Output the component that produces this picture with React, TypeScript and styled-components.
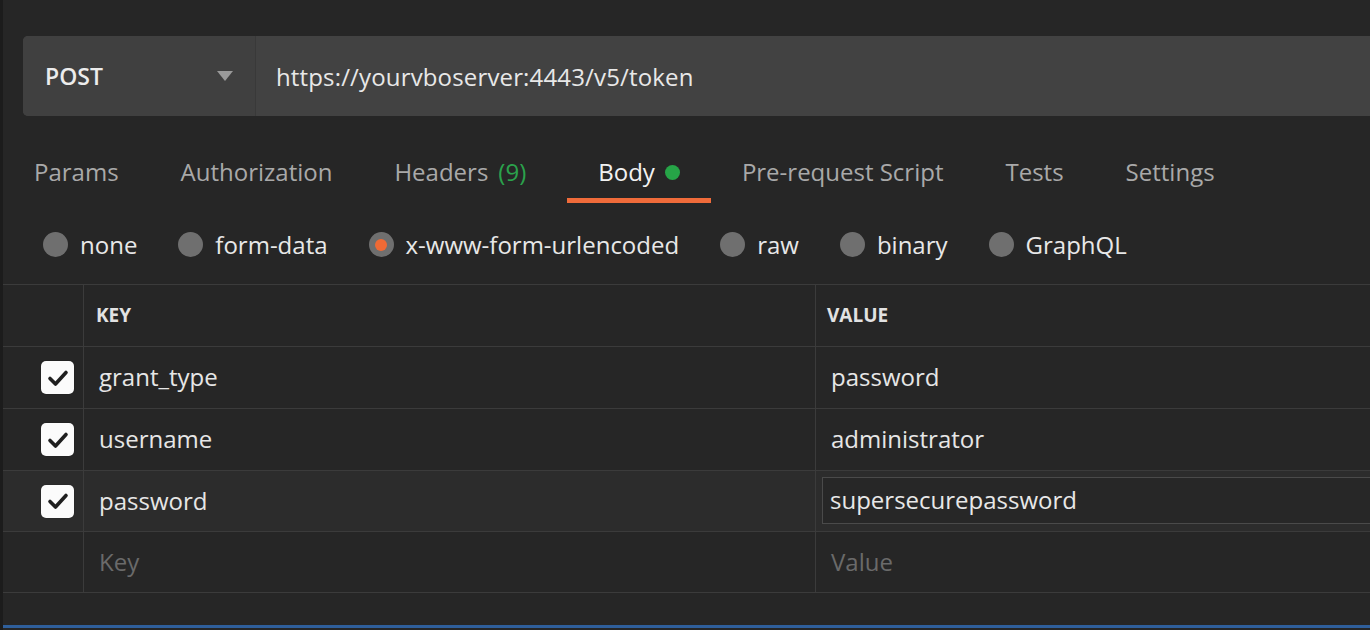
import React from "react";
import styled, { createGlobalStyle } from "styled-components";

const Global = createGlobalStyle`
  html, body { margin: 0; padding: 0; background: #262626; }
  body { font-family: "Open Sans", "Noto Sans", sans-serif; overflow: hidden; }
  * { box-sizing: border-box; }
`;

const Page = styled.div`
  width: 1370px;
  height: 630px;
  background: #262626;
  border-left: 3px solid #1c1c1c;
  display: flex;
  flex-direction: column;
  overflow: hidden;
`;

const UrlBar = styled.div`
  margin: 36px 0 0 20px;
  height: 80px;
  flex: none;
  display: flex;
  background: #424242;
  border-radius: 5px 0 0 5px;
`;

const Method = styled.div`
  width: 233px;
  flex: none;
  display: flex;
  align-items: center;
  justify-content: space-between;
  padding: 0 22px 0 22px;
  background: #404040;
  border-right: 1px solid #393939;
  border-radius: 5px 0 0 5px;
  color: #ececec;
  font-size: 23px;
  font-weight: 600;
`;

const Url = styled.div`
  flex: 1;
  display: flex;
  align-items: center;
  padding-left: 20px;
  color: #e8e8e8;
  font-size: 24px;
  letter-spacing: 0.15px;
  white-space: nowrap;
`;

const Tabs = styled.div`
  display: flex;
  flex: none;
`;

const Tab = styled.div<{ $active?: boolean }>`
  padding: 41px 31px 11px;
  line-height: 30px;
  font-size: 24px;
  color: ${(p) => (p.$active ? "#f2f2f2" : "#a9a9a9")};
  border-bottom: 5px solid ${(p) => (p.$active ? "#ef6b3a" : "transparent")};
  display: flex;
  align-items: center;
  white-space: nowrap;
`;

const Count = styled.span`
  color: #2ba24c;
  margin: 0 10px 0 10px;
`;

const Dot = styled.span`
  width: 15px;
  height: 15px;
  border-radius: 50%;
  background: #26a447;
  margin-left: 10px;
  margin-top: 1px;
`;

const RadioRow = styled.div`
  display: flex;
  flex: none;
  align-items: center;
  gap: 41px;
  padding: 29px 0 27px 40px;
  line-height: 25px;
`;

const RadioItem = styled.label`
  display: flex;
  align-items: center;
  gap: 12px;
  color: #e8e8e8;
  font-size: 24px;
  white-space: nowrap;
`;

const RadioCircle = styled.span<{ $on?: boolean }>`
  width: 25px;
  height: 25px;
  border-radius: 50%;
  background: #6f6f6f;
  display: flex;
  align-items: center;
  justify-content: center;
  &::after {
    content: "";
    width: 12px;
    height: 12px;
    border-radius: 50%;
    background: ${(p) => (p.$on ? "#f06a35" : "transparent")};
  }
`;

const Table = styled.div`
  border-top: 1px solid #3b3b3b;
  display: flex;
  flex: none;
  flex-direction: column;
`;

const Row = styled.div<{ $hl?: boolean; $h?: number }>`
  display: grid;
  grid-template-columns: 81px 732px 1fr;
  height: ${(p) => p.$h ?? 62}px;
  border-bottom: 1px solid #3b3b3b;
  background: ${(p) => (p.$hl ? "#2c2c2c" : "transparent")};
`;

const Cell = styled.div<{ $pad?: number }>`
  display: flex;
  align-items: center;
  padding-left: ${(p) => p.$pad ?? 15}px;
  padding-bottom: 2px;
  border-right: 1px solid #3b3b3b;
  font-size: 24px;
  color: #e6e6e6;
  white-space: nowrap;
  &:last-child { border-right: none; }
`;

const CheckCell = styled(Cell)`
  justify-content: flex-end;
  padding: 0 9px 0 0;
`;

const HeadText = styled.span`
  font-size: 19px;
  font-weight: 700;
  color: #e2e2e2;
`;

const Placeholder = styled.span`
  color: #6a6a6a;
`;

const Checkbox = styled.span`
  width: 33px;
  height: 33px;
  background: #fbfbfb;
  border-radius: 5px;
  display: flex;
  align-items: center;
  justify-content: center;
  box-shadow: 0 0 1px rgba(0, 0, 0, 0.6);
`;

const InputBox = styled.div`
  flex: 1;
  height: 47px;
  margin: 0 0 0 6px;
  border: 1px solid #4a4a4a;
  border-right: none;
  background: #272727;
  display: flex;
  align-items: center;
  padding: 0 0 2px 7px;
  font-size: 24px;
  color: #e8e8e8;
`;

const ValueCell = styled(Cell)`
  padding-left: 0;
`;

const Footer = styled.div`
  flex: 1;
  display: flex;
  flex-direction: column;
  justify-content: flex-end;
  padding-bottom: 2px;
`;

const BlueLine = styled.div`
  height: 3px;
  background: #2f5f9b;
`;

const Check = () => (
  <svg width="22" height="18" viewBox="0 0 22 18">
    <path d="M3 9.5 L8.5 15 L19 3.5" fill="none" stroke="#1f1f1f" strokeWidth="3.6" strokeLinecap="round" strokeLinejoin="round" />
  </svg>
);

const Caret = () => (
  <svg width="16" height="10" viewBox="0 0 16 10">
    <path d="M0 0 H16 L8 10 Z" fill="#9a9a9a" />
  </svg>
);

const rows = [
  { k: "grant_type", v: "password" },
  { k: "username", v: "administrator" },
];

export default function App() {
  return (
    <>
      <Global />
      <Page>
        <UrlBar>
          <Method>
            <span>POST</span>
            <Caret />
          </Method>
          <Url>https://yourvboserver:4443/v5/token</Url>
        </UrlBar>
        <Tabs>
          <Tab>Params</Tab>
          <Tab>Authorization</Tab>
          <Tab>
            Headers<Count>(9)</Count>
          </Tab>
          <Tab $active>
            Body<Dot />
          </Tab>
          <Tab>Pre-request Script</Tab>
          <Tab>Tests</Tab>
          <Tab>Settings</Tab>
        </Tabs>
        <RadioRow>
          {["none", "form-data", "x-www-form-urlencoded", "raw", "binary", "GraphQL"].map((r) => (
            <RadioItem key={r}>
              <RadioCircle $on={r === "x-www-form-urlencoded"} />
              {r}
            </RadioItem>
          ))}
        </RadioRow>
        <Table>
          <Row>
            <Cell />
            <Cell $pad={12}>
              <HeadText>KEY</HeadText>
            </Cell>
            <Cell $pad={11}>
              <HeadText>VALUE</HeadText>
            </Cell>
          </Row>
          {rows.map((r) => (
            <Row key={r.k}>
              <CheckCell>
                <Checkbox>
                  <Check />
                </Checkbox>
              </CheckCell>
              <Cell>{r.k}</Cell>
              <Cell>{r.v}</Cell>
            </Row>
          ))}
          <Row $hl $h={61}>
            <CheckCell>
              <Checkbox>
                <Check />
              </Checkbox>
            </CheckCell>
            <Cell>password</Cell>
            <ValueCell>
              <InputBox>supersecurepassword</InputBox>
            </ValueCell>
          </Row>
          <Row $h={61}>
            <Cell />
            <Cell>
              <Placeholder>Key</Placeholder>
            </Cell>
            <Cell>
              <Placeholder>Value</Placeholder>
            </Cell>
          </Row>
        </Table>
        <Footer>
          <BlueLine />
        </Footer>
      </Page>
    </>
  );
}
